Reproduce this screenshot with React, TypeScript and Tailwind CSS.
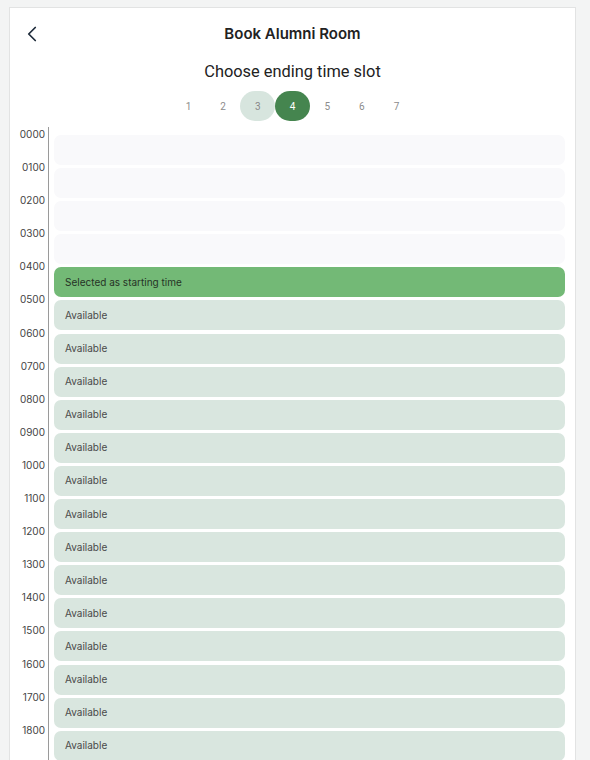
import { ChevronLeft } from "lucide-react";

type SlotState = "past" | "start" | "open";

const hours = Array.from({ length: 19 }, (_, i) => String(i * 100).padStart(4, "0"));

const slotState = (i: number): SlotState => (i < 4 ? "past" : i === 4 ? "start" : "open");

export default function App() {
    const steps = [1, 2, 3, 4, 5, 6, 7];

    return (
        <div className="h-screen overflow-hidden bg-[#f3f4f4] pt-[7px] pl-[9px]" style={{ fontFamily: "Inter, 'Noto Sans', sans-serif" }}>
            <div className="w-[567px] border border-[#e2e3e3] bg-white">
                {/* Header */}
                <div className="grid h-[52px] grid-cols-[1fr_auto_1fr] items-center">
                    <div className="pl-[9px]">
                        <ChevronLeft size={26} strokeWidth={1.6} className="text-[#1e2b3a]" />
                    </div>
                    <h1 className="text-[15px] font-semibold text-[#222]">Book Alumni Room</h1>
                    <div />
                </div>

                <p className="text-center text-[16.4px] leading-[24px] text-[#222]" style={{ fontFamily: "Roboto, sans-serif" }}>
                    Choose ending time slot
                </p>

                {/* Step pills */}
                <div className="mt-[7px] flex justify-center" style={{ fontFamily: "Roboto, sans-serif" }}>
                    {steps.map((n) => (
                        <div
                            key={n}
                            className={
                                n === 4
                                    ? "flex h-[30px] w-[34.7px] items-center justify-center rounded-full bg-[#45854f] text-[10px] text-white"
                                    : n === 3
                                    ? "flex h-[30px] w-[34.7px] items-center justify-center rounded-full bg-[#d7e5de] text-[10px] text-[#888]"
                                    : "flex h-[30px] w-[34.7px] items-center justify-center rounded-full text-[10px] text-[#8c8c8c]"
                            }
                        >
                            {n}
                        </div>
                    ))}
                </div>

                {/* Timeline */}
                <div className="mt-[6px] flex">
                    <div className="flex w-[38px] flex-col pt-[1px] pr-[3px] text-right">
                        {hours.map((h) => (
                            <div key={h} className="h-[33.1px] text-[10px] leading-[12px] text-[#444]">
                                {h}
                            </div>
                        ))}
                    </div>
                    <div className="flex flex-1 flex-col gap-[3.1px] border-l border-[#9a9a9a] pt-[8px] pr-[10px] pl-[5px]">
                        {hours.map((h, i) => {
                            const s = slotState(i);
                            if (s === "past") {
                                return <div key={h} className="h-[30px] rounded-[7px] bg-[#f9f9fb]" />;
                            }
                            if (s === "start") {
                                return (
                                    <div key={h} className="flex h-[30px] items-center rounded-[7px] bg-[#73b976] pl-[11px] text-[10px] text-[#263326]">
                                        Selected as starting time
                                    </div>
                                );
                            }
                            return (
                                <div key={h} className="flex h-[30px] items-center rounded-[7px] bg-[#d9e6df] pl-[11px] text-[10px] text-[#4a4a4a]">
                                    Available
                                </div>
                            );
                        })}
                    </div>
                </div>
            </div>
        </div>
    );
}
